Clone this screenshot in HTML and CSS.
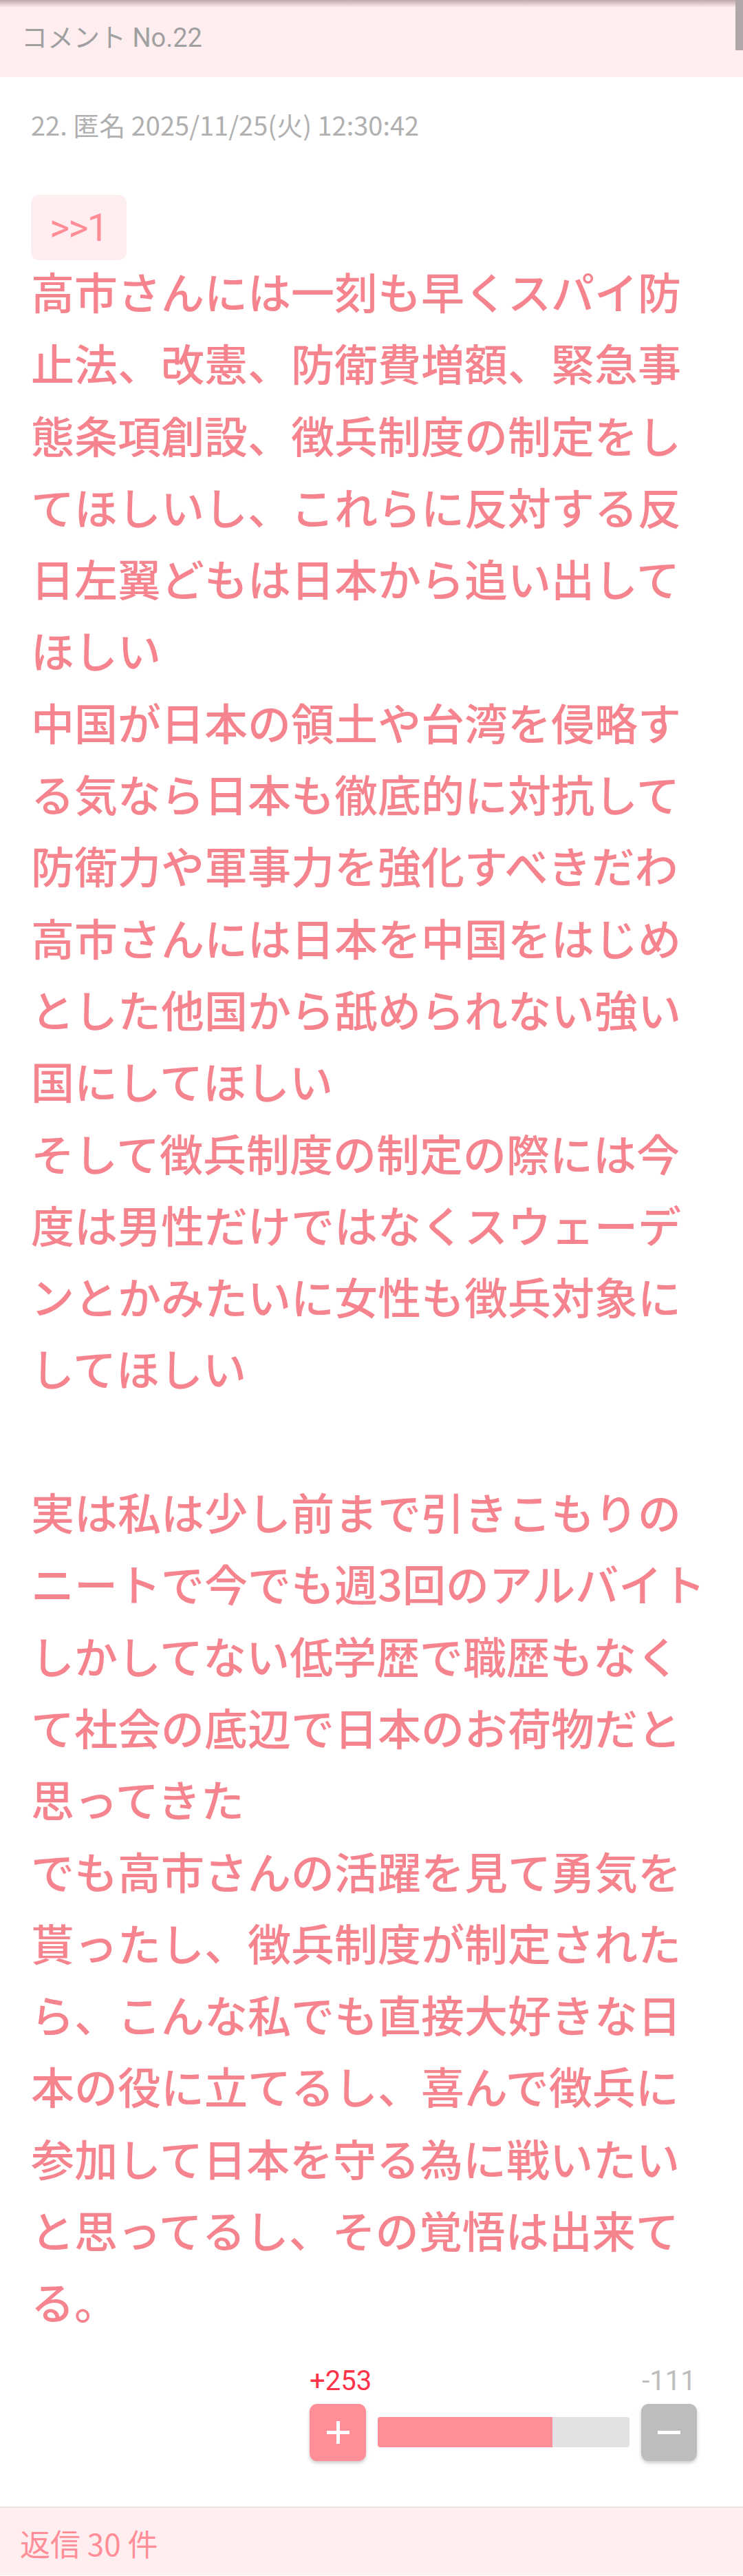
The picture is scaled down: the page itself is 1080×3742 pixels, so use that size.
FILE: index.html
```html
<!DOCTYPE html>
<html lang="ja">
<head>
<meta charset="utf-8">
<title>コメント No.22</title>
<link rel="stylesheet" href="styles.css">
</head>
<body>
<div class="page">
  <header class="header">
    <span class="header-title">コメント No.22</span>
    <div class="scroll-thumb"></div>
  </header>

  <article class="comment">
    <div class="meta">22. 匿名 2025/11/25(火) 12:30:42</div>
    <div class="anchor">&gt;&gt;1</div>
    <p class="body-text">高市さんには一刻も早くスパイ防止法、改憲、防衛費増額、緊急事態条項創設、徴兵制度の制定をしてほしいし、これらに反対する反日左翼どもは日本から追い出してほしい<br>中国が日本の領土や台湾を侵略する気なら日本も徹底的に対抗して防衛力や軍事力を強化すべきだわ<br>高市さんには日本を中国をはじめとした他国から舐められない強い国にしてほしい<br>そして徴兵制度の制定の際には今度は男性だけではなくスウェーデンとかみたいに女性も徴兵対象にしてほしい<br><br>実は私は少し前まで引きこもりのニートで今でも週3回のアルバイトしかしてない低学歴で職歴もなくて社会の底辺で日本のお荷物だと思ってきた<br>でも高市さんの活躍を見て勇気を貰ったし、徴兵制度が制定されたら、こんな私でも直接大好きな日本の役に立てるし、喜んで徴兵に参加して日本を守る為に戦いたいと思ってるし、その覚悟は出来てる。</p>

    <div class="votes">
      <div class="vote-label plus-label">+253</div>
      <div class="vote-label minus-label">-111</div>
      <button class="vote-btn plus-btn" type="button" aria-label="plus">
        <svg width="33" height="33" viewBox="0 0 33 33"><rect x="14" y="0" width="5" height="33" fill="#fff"/><rect x="0" y="14" width="33" height="5" fill="#fff"/></svg>
      </button>
      <div class="bar"><div class="bar-fill" style="width: 69.5%"></div></div>
      <button class="vote-btn minus-btn" type="button" aria-label="minus">
        <svg width="33" height="33" viewBox="0 0 33 33"><rect x="0" y="14" width="33" height="5" fill="#fff"/></svg>
      </button>
    </div>
  </article>

  <footer class="replies">返信 30 件</footer>
</div>
</body>
</html>
```

FILE: styles.css
```css
* {
  box-sizing: border-box;
}

html, body {
  margin: 0;
  padding: 0;
  background: #ffffff;
}

body {
  font-family: "Roboto", "Noto Sans CJK JP", sans-serif;
}

.page {
  width: 1080px;
}

.header {
  position: relative;
  height: 112px;
  background: #ffeef0;
  display: flex;
  align-items: center;
  padding-left: 31px;
  padding-bottom: 2px;
}

.header::before {
  content: "";
  position: absolute;
  left: 0;
  right: 0;
  top: 0;
  height: 11px;
  background: linear-gradient(rgba(110, 80, 85, 0.45), rgba(110, 80, 85, 0));
}

.header-title {
  font-size: 38px;
  color: #a0a0a0;
  line-height: 1;
}

.scroll-thumb {
  position: absolute;
  top: 0;
  right: 0;
  width: 11px;
  height: 73px;
  background: #aea6a7;
}

.comment {
  padding: 0 45px;
}

.meta {
  margin-top: 41px;
  font-family: "Noto Sans CJK JP", "Roboto", sans-serif;
  font-size: 38px;
  line-height: 56px;
  color: #b0b0b0;
}

.anchor {
  display: inline-flex;
  align-items: center;
  margin-top: 74px;
  height: 95px;
  padding: 0 28px 0 27px;
  background: #ffeef0;
  border-radius: 12px;
  color: #ff8c96;
  font-size: 56px;
  letter-spacing: -2px;
}

.body-text {
  margin: -8px 0 0 0;
  font-family: "Noto Sans CJK JP", "Roboto", sans-serif;
  font-weight: 500;
  font-size: 63px;
  line-height: 104.3px;
  color: #f6848f;
}

.votes {
  display: grid;
  grid-template-columns: 82px 366px 81px;
  grid-template-rows: 48px 83px;
  column-gap: 17px;
  row-gap: 9px;
  width: 563px;
  margin: 40px 22px 66px auto;
}

.vote-label {
  font-family: "Roboto", sans-serif;
  font-size: 40px;
  line-height: 48px;
  text-align: center;
  white-space: nowrap;
}

.plus-label {
  grid-column: 1;
  grid-row: 1;
  color: #ff3348;
}

.minus-label {
  grid-column: 3;
  grid-row: 1;
  color: #bdbdbd;
}

.vote-btn {
  grid-row: 2;
  border: none;
  padding: 0;
  margin: 0;
  border-radius: 11px;
  display: flex;
  align-items: center;
  justify-content: center;
  box-shadow: 0 3px 5px rgba(0, 0, 0, 0.2);
}

.plus-btn {
  grid-column: 1;
  background: #ff8e99;
}

.minus-btn {
  grid-column: 3;
  background: #bdbdbd;
}

.bar {
  grid-column: 2;
  grid-row: 2;
  align-self: center;
  height: 44px;
  background: #e2e2e2;
  border-radius: 4px;
  overflow: hidden;
}

.bar-fill {
  height: 100%;
  background: #ff8e99;
}

.replies {
  height: 100px;
  border-top: 2px solid #e8e4e6;
  background: #ffeef0;
  display: flex;
  align-items: center;
  padding-left: 29px;
  padding-top: 4px;
  font-family: "Noto Sans CJK JP", "Roboto", sans-serif;
  font-size: 44px;
  color: #ff8e99;
}
```
